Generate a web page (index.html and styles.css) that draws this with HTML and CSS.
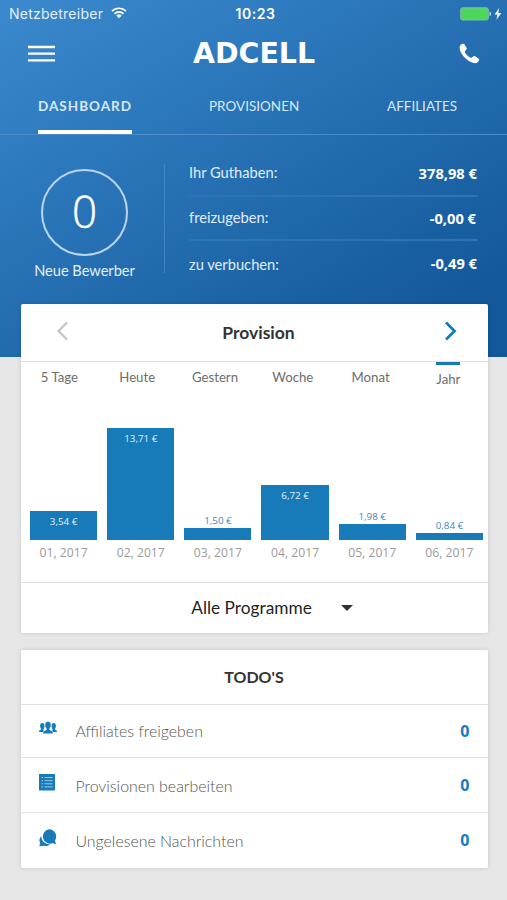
FILE: index.html
```html
<!DOCTYPE html>
<html lang="de">
<head>
<meta charset="utf-8">
<title>ADCELL</title>
<link rel="stylesheet" href="styles.css">
</head>
<body>
<header class="hero">
  <div class="status">
    <div class="carrier"><span class="carrier-name">Netzbetreiber</span>
      <svg class="wifi" width="16" height="12" viewBox="0 0 16 12"><g fill="none" stroke="#fff" stroke-width="1.7"><path d="M1 4.1a10 10 0 0 1 14 0"/><path d="M3.5 6.8a6.4 6.4 0 0 1 9 0"/></g><path fill="#fff" d="M8 11.3 5.3 8.6a3.9 3.9 0 0 1 5.4 0z"/></svg>
    </div>
    <time class="clock">10:23</time>
    <div class="power">
      <svg width="42" height="14" viewBox="0 0 42 14"><rect x=".7" y=".8" width="27.6" height="12.2" rx="1.8" fill="#4cd75c" stroke="#82b9ae" stroke-width="1"/><path d="M29.5 4.8c1.3.3 1.6 1.1 1.6 2.1s-.3 1.8-1.6 2.1z" fill="#b9d8f4"/><path d="M39.2 1 34.6 7.6h2.8L36.5 12.8l4.7-6.8h-3z" fill="#fff"/></svg>
    </div>
  </div>
  <div class="topbar">
    <svg class="burger" width="27" height="18" viewBox="0 0 27 18"><path d="M0 2h27M0 8.700h27M0 15.400h27" stroke="#fff" stroke-width="2.300"/></svg>
    <svg class="logo" width="128" height="36" viewBox="0 0 128 36"><text x="3" y="28" textLength="122" lengthAdjust="spacingAndGlyphs">ADCELL</text></svg>
    <svg class="phone" width="21" height="21" viewBox="0 0 21 21"><path fill="#fff" d="M.6 4.2C.8 2.2 2.2 1 3.9.7c.8-.1 1.2.1 1.7.9l1.8 3c.5.9.4 1.5-.2 2.2L6.1 8c-.4.5-.4.9-.1 1.4 1.3 2.3 3.2 4.1 5.600 5.300.5.300.9.200 1.300-.2l1.300-1.100c.6-.5 1.200-.5 1.900-.1l3.300 2.100c.7.500.9 1 .600 1.800-.7 1.800-2.100 3-4 3-3.800-.1-7.900-2.700-10.900-6.100C2.500 11.200.400 7.200.600 4.200z"/></svg>
  </div>
  <nav class="tabs">
    <a class="tab active">DASHBOARD</a>
    <a class="tab">PROVISIONEN</a>
    <a class="tab last">AFFILIATES</a>
  </nav>
  <section class="summary">
    <div class="applicants">
      <div class="ring">0</div>
      <div class="ring-label">Neue Bewerber</div>
    </div>
    <dl class="balances">
      <div class="balance"><dt>Ihr Guthaben:</dt><dd>378,98 €</dd></div>
      <div class="balance"><dt>freizugeben:</dt><dd>-0,00 €</dd></div>
      <div class="balance"><dt>zu verbuchen:</dt><dd>-0,49 €</dd></div>
    </dl>
  </section>
</header>
<main class="content">
  <section class="card">
    <div class="card-head">
      <svg width="13" height="20" viewBox="0 0 13 20"><path d="M11 1.500 2.500 10 11 18.500" fill="none" stroke="#c4c4c4" stroke-width="2.300"/></svg>
      <h2>Provision</h2>
      <svg width="13" height="20" viewBox="0 0 13 20"><path d="M2 1.500 10.500 10 2 18.500" fill="none" stroke="#187bb9" stroke-width="2.800"/></svg>
    </div>
    <div class="ranges">
      <span>5 Tage</span><span>Heute</span><span>Gestern</span><span>Woche</span><span>Monat</span><span class="current"><b>Jahr</b></span>
    </div>
    <div class="chart">
      <div class="col"><div class="bar h1">3,54 €</div><div class="month">01, 2017</div></div>
      <div class="col"><div class="bar h2">13,71 €</div><div class="month">02, 2017</div></div>
      <div class="col"><div class="amount">1,50 €</div><div class="bar h3"></div><div class="month">03, 2017</div></div>
      <div class="col"><div class="bar h4">6,72 €</div><div class="month">04, 2017</div></div>
      <div class="col"><div class="amount">1,98 €</div><div class="bar h5"></div><div class="month">05, 2017</div></div>
      <div class="col"><div class="amount">0,84 €</div><div class="bar h6"></div><div class="month">06, 2017</div></div>
    </div>
    <div class="select"><span>Alle Programme</span><i class="caret"></i></div>
  </section>
  <section class="card todos">
    <h2 class="todo-title">TODO'S</h2>
    <div class="todo first">
      <svg width="18" height="14" viewBox="0 0 18 14"><g fill="#187bb9"><ellipse cx="3.300" cy="4.900" rx="2.200" ry="2.900"/><path d="M2 6.500h2.500v2.300l.5 2.200H0c0-1.500.5-1.800 2-2.500z"/><ellipse cx="14.700" cy="4.900" rx="2.200" ry="2.900"/><path d="M13.500 6.500H16v2c1.500.7 2 1 2 2.500h-5l.5-2z"/></g><path d="M9 .5c2.100 0 3 1.500 3 3.500 0 1.500-.5 2.600-1.300 3.300v1.600c2.100.7 3.300 1.200 3.300 3.800H4c0-2.600 1.200-3.100 3.300-3.800V7.300C6.500 6.600 6 5.500 6 4 6 2 6.900.5 9 .5z" fill="#187bb9" stroke="#fff" stroke-width=".4"/></svg>
      <span class="todo-name">Affiliates freigeben</span><span class="count">0</span>
    </div>
    <div class="todo">
      <svg width="18" height="17" viewBox="0 0 18 17"><path fill="#187bb9" d="M0 0h16v16.500H0z"/><path d="M2.500 3.500H4m1.500 0h8.200M2.500 6.700H4m1.500 0h8.200M2.500 9.800H4m1.500 0h8.200M2.500 12.900H4m1.500 0h8.200" stroke="#9dcbe6" stroke-width="1"/></svg>
      <span class="todo-name">Provisionen bearbeiten</span><span class="count">0</span>
    </div>
    <div class="todo">
      <svg width="18" height="18" viewBox="0 0 18 18"><path fill="#187bb9" d="M2.300 7C-.2 9.700.2 13 1.300 14.300L.2 17.300l4.500-.6c2.500.8 5 .2 6.600-1.400C6 15.300 2.300 12 2.300 7z"/><path fill="#187bb9" d="M10 .3a7.200 7.200 0 0 1 6 11.100l1 3.500-3.500-.7A7.200 7.200 0 1 1 10 .3z"/></svg>
      <span class="todo-name">Ungelesene Nachrichten</span><span class="count">0</span>
    </div>
  </section>
</main>
</body>
</html>
```
FILE: styles.css
```css
* { box-sizing: border-box; }
body { margin: 0; height: 900px; overflow: hidden; background: #e6e6e6; font-family: Lato, sans-serif; color: #333; }
h2, dl, dd { margin: 0; }

.hero { height: 357px; color: #fff; background: linear-gradient(150deg, #3b89ce 0%, #2d79bd 30%, #1f68aa 60%, #13589a 88%, #13589a 100%); }

.status { height: 27px; display: grid; grid-template-columns: 1fr auto 1fr; align-items: center; padding: 0 5px 0 9px; font-family: Inter, sans-serif; }
.carrier { display: flex; align-items: center; gap: 8px; font-size: 14px; color: #e3effb; letter-spacing: .25px; }
.wifi { margin-top: -2px; }
.clock { font-size: 14px; font-weight: 600; letter-spacing: .6px; }
.power { display: flex; justify-content: flex-end; }

.topbar { height: 52px; display: grid; grid-template-columns: 162px 1fr 21px; align-items: center; padding: 0 27px 0 28px; }
.burger { margin-top: 2px; }
.logo { fill: #fff; font: bold 27.500px "DejaVu Sans", sans-serif; }
.phone { flex: none; }

.tabs { height: 56px; display: grid; grid-template-columns: 171px 178px 71px; padding-left: 38px; border-bottom: 1px solid #4b8cca; font-size: 13.5px; }
.tab { justify-self: start; height: 55px; line-height: 54px; color: #d9e8f7; }
.tab.active { font-weight: 700; letter-spacing: 1px; border-bottom: 4px solid #fff; }

.summary { display: flex; padding: 29px 29px 0 0; }
.applicants { width: 165px; height: 109px; padding: 5px 0 0 5px; display: flex; flex-direction: column; align-items: center; border-right: 1.500px solid #4384c1; }
.ring { flex: none; width: 87px; height: 87px; border: 2px solid #bbd5ee; border-radius: 50%; font: 300 44px/81px "Open Sans", sans-serif; -webkit-text-stroke: .5px #fff; text-align: center; }
.ring-label { margin-top: 5px; font-size: 14.600px; line-height: 19px; white-space: nowrap; color: #e3effb; }
.balances { flex: 1; margin-left: 24px; }
.balance { display: flex; justify-content: space-between; align-items: center; height: 44px; border-bottom: 2px solid #2f73b4; }
.balance:first-child { height: 33px; padding-bottom: 13px; }
.balance:last-child { height: 48px; border: 0; }
.balance dt { font-size: 14.700px; color: #e0edf9; margin-top: -2px; }
.balance dd { font: 700 14.700px/20px "Open Sans", sans-serif; margin-right: 1px; }
.balance:nth-child(2) dd { margin: -1px 2px 0 0; }
.balance:last-child dd { margin-top: -5px; }

.content { padding: 0 19.500px 0 20.500px; margin-top: -53px; }
.card { background: #fff; border-radius: 2px; box-shadow: 0 0 4px rgba(0, 0, 0, .13); height: 328.500px; }
.card-head { height: 58px; display: flex; justify-content: space-between; align-items: center; padding: 0 31px 4px 35px; border-bottom: 1.500px solid #e2e2e2; }
.card-head h2 { font-size: 17.500px; padding: 3px 0 0 5px; }
.ranges { display: grid; grid-template-columns: repeat(6, 77.800px); height: 66px; font-size: 13.200px; line-height: 31px; text-align: center; color: #6d6d6d; }
.current b { display: inline-block; font-weight: 400; border-top: 3px solid #187bb9; line-height: 29px; }
.chart { height: 155px; display: grid; grid-template-columns: repeat(6, 1fr); gap: 10px; padding: 0 4.500px 18px 9.500px; align-items: end; border-bottom: 1.500px solid #e2e2e2; font-family: "Open Sans", sans-serif; text-align: center; }
.bar { background: #187bb9; color: #e3f1fa; font-size: 9.800px; line-height: 22px; }
.h1 { height: 28.500px; }
.h2 { height: 111.500px; }
.h3 { height: 12px; }
.h4 { height: 54.500px; }
.h5 { height: 16px; }
.h6 { height: 7px; }
.amount { font-size: 9.800px; line-height: 14px; color: #3c88bd; }
.month { font-size: 12.200px; line-height: 25px; height: 25px; color: #9b9b9b; }
.select { height: 49px; display: flex; justify-content: center; align-items: center; gap: 29px; padding-left: 36px; font-size: 17.300px; color: #1f1f1f; }
.caret { border: 6px solid transparent; border-top-color: #333; border-bottom: 0; }

.todos { height: 218.500px; margin-top: 17px; }
.todo-title { height: 54px; font-size: 16px; line-height: 54px; text-align: center; }
.todo { height: 55px; border-top: 1.500px solid #e2e2e2; display: flex; align-items: center; padding: 0 18px 0 18.500px; }
.todo.first { height: 53.500px; }
.todo svg { flex: none; margin-top: -5px; }
.todo-name { flex: 1; margin-left: 18.500px; font-size: 15.900px; font-weight: 300; color: #555; }
.count { font: 700 16px/20px "Open Sans", sans-serif; color: #187bb9; }
```
